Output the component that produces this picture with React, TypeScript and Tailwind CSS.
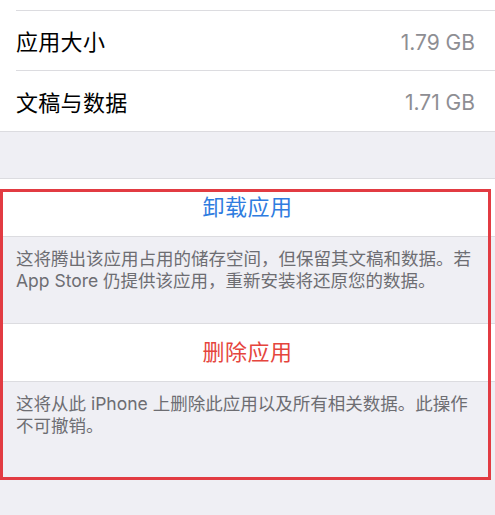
import React from 'react';

const font = "font-['Inter','Noto_Sans_CJK_SC',sans-serif]";

const StorageRow: React.FC<{ label: string; value: string; last?: boolean }> = ({ label, value, last }) => (
  <div className={`h-[60px] pt-[4px] flex items-center justify-between pr-5 ${last ? '' : 'border-b border-[#dcdce0]'}`}>
    <span className="text-[22px] text-black tracking-[0.3px]">{label}</span>
    <span className="text-[21px] text-[#8e8e93]">{value}</span>
  </div>
);

const ActionCell: React.FC<{ label: string; color: string }> = ({ label, color }) => (
  <div className="h-[59px] bg-white flex items-center justify-center border-y border-[#dcdce0]">
    <span className={`text-[22px] tracking-[0.5px] ${color}`}>{label}</span>
  </div>
);

const App: React.FC = () => {
  return (
    <div className={`min-h-[515px] bg-[#efeff4] ${font}`}>
      {/* storage usage */}
      <div className="bg-white pl-4 border-b border-[#dcdce0]">
        <div className="h-[11px] border-b border-[#dcdce0]" />
        <StorageRow label="应用大小" value="1.79 GB" />
        <StorageRow label="文稿与数据" value="1.71 GB" last />
      </div>

      <div className="h-[46px]" />

      {/* offload / delete actions */}
      <div className="relative">
        <ActionCell label="卸载应用" color="text-[#2f7ce0]" />
        <div className="h-[86px] px-4 pt-[11px] text-[17.5px] leading-[22px] text-[#6d6d72]">
          这将腾出该应用占用的储存空间，但保留其文稿和数据。若
          <br />
          App Store 仍提供该应用，重新安装将还原您的数据。
        </div>
        <ActionCell label="删除应用" color="text-[#e5453d]" />
        <div className="h-[140px] px-4 pt-[11px] text-[17.5px] leading-[22px] text-[#6d6d72]">
          这将从此 iPhone 上删除此应用以及所有相关数据。此操作
          <br />
          不可撤销。
        </div>

        <div className="absolute top-[11px] left-0 w-[491px] h-[291px] border-[3px] border-[#e23b42] pointer-events-none" />
      </div>
    </div>
  );
};

export default App;
